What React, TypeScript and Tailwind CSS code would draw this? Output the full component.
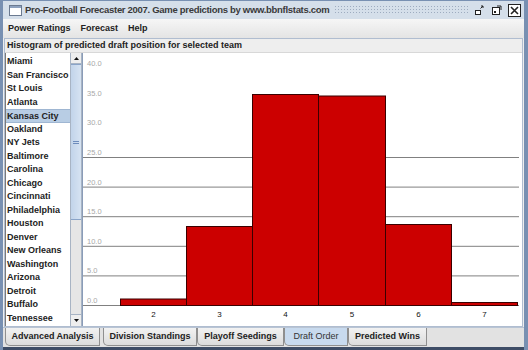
import React from "react";

const teams = [
  "Miami","San Francisco","St Louis","Atlanta","Kansas City","Oakland","NY Jets","Baltimore","Carolina","Chicago","Cincinnati","Philadelphia","Houston","Denver","New Orleans","Washington","Arizona","Detroit","Buffalo","Tennessee",
];

const bars = [
  { label: "2", x0: 38, x1: 104, top: 245.5 },
  { label: "3", x0: 104, x1: 170, top: 173 },
  { label: "4", x0: 170, x1: 236, top: 41 },
  { label: "5", x0: 236, x1: 303, top: 42.5 },
  { label: "6", x0: 303, x1: 369, top: 171 },
  { label: "7", x0: 369, x1: 435, top: 249 },
];

const yLabels = ["40.0","35.0","30.0","25.0","20.0","15.0","10.0","5.0","0.0"];

function Chart() {
  const zero = 252;
  const step = 29.6;
  return (
    <svg width="437" height="273" viewBox="0 0 437 273" className="block">
      <rect x="0" y="0" width="437" height="273" fill="#ffffff" />
      {[0, 1, 2, 3, 4, 5].map((i) => (
        <line key={i} x1="1" x2="437" y1={zero - i * step + 0.5} y2={zero - i * step + 0.5} stroke="#808080" strokeWidth="1" />
      ))}
      {yLabels.map((t, i) => (
        <text key={t} x="5" y={zero - (8 - i) * step - 2} fontSize="7.5" fill="#a8a8a8" fontFamily="'Liberation Sans', Arial, sans-serif">{t}</text>
      ))}
      {bars.map((b) => (
        <rect key={b.label} x={b.x0 + 0.5} y={b.top + 0.5} width={b.x1 - b.x0} height={zero - b.top} fill="#cc0000" stroke="#3a0000" strokeWidth="1" />
      ))}
      {bars.map((b) => (
        <text key={"l" + b.label} x={(b.x0 + b.x1) / 2 + 0.5} y="264" fontSize="8" textAnchor="middle" fill="#111" fontFamily="'Liberation Sans', Arial, sans-serif">{b.label}</text>
      ))}
      <line x1="0.5" x2="0.5" y1="0" y2="273" stroke="#8a9cb8" strokeWidth="1" />
    </svg>
  );
}

function TitleIcon() {
  return (
    <svg width="13" height="11" viewBox="0 0 13 11">
      <rect x="0.5" y="0.5" width="12" height="10" fill="#ffffff" stroke="#6b7a90" />
      <rect x="1" y="1" width="11" height="2" fill="#8ea2bf" />
    </svg>
  );
}

function WinButtons() {
  return (
    <div className="flex items-center gap-[6px] pr-[3px]">
      <svg width="11" height="11" viewBox="0 0 11 11">
        <rect x="1.5" y="5.5" width="5" height="4" fill="#fff" stroke="#222" />
        <path d="M7 1 L9 1 L9 3 M9 1 L6.5 3.5" stroke="#222" fill="none" />
      </svg>
      <svg width="11" height="11" viewBox="0 0 11 11">
        <rect x="1.5" y="2.5" width="7" height="7" fill="#fff" stroke="#222" />
        <path d="M6 1 L10 1 L10 5" stroke="#222" fill="none" />
        <rect x="3" y="6" width="2" height="2" fill="#222" />
      </svg>
      <svg width="13" height="13" viewBox="0 0 13 13">
        <rect x="0.5" y="0.5" width="12" height="12" fill="#fff" stroke="#222" />
        <path d="M3 3 L10 10 M10 3 L3 10" stroke="#222" strokeWidth="1.6" />
      </svg>
    </div>
  );
}

const tabs = [
  { t: "Advanced Analysis", w: "w-[95px]", sel: false },
  { t: "Division Standings", w: "w-[94px]", sel: false },
  { t: "Playoff Seedings", w: "w-[87px]", sel: false },
  { t: "Draft Order", w: "w-[64px]", sel: true },
  { t: "Predicted Wins", w: "w-[79px]", sel: false },
];

export default function App() {
  return (
    <div className="w-[528px] h-[350px] overflow-hidden bg-[#7890b2] pl-[3px] pr-[4px] pt-[1px] flex flex-col font-['Liberation_Sans',Arial,sans-serif] text-[#222]">
      {/* Title bar */}
      <div className="h-[18px] shrink-0 flex items-center bg-[#d5dfea] pl-[6px]">
        <TitleIcon />
        <span className="ml-[3px] text-[9.5px] font-bold text-[#3a3a3a] whitespace-nowrap tracking-[-0.3px]">
          Pro-Football Forecaster 2007. Game predictions by www.bbnflstats.com
        </span>
        <div className="flex-1 h-[10px] mx-[5px] bg-[radial-gradient(circle,#9eacc0_0.7px,transparent_0.9px)] bg-[length:3px_3px]" />
        <WinButtons />
      </div>
      {/* Menu bar */}
      <div className="h-[19px] shrink-0 flex items-center gap-[10px] pl-[5px] bg-gradient-to-b from-[#f6f6f6] to-[#e4e4e4] text-[9px] font-bold">
        <span>Power Ratings</span>
        <span>Forecast</span>
        <span>Help</span>
      </div>
      {/* Content */}
      <div className="flex-1 flex flex-col bg-[#eeeeee] min-h-0">
        <div className="flex-1 flex flex-col border border-[#b0bdd0] ml-[1px] mr-[1px] min-h-0">
          <div className="h-[14px] shrink-0 flex items-center pl-[2px] text-[9px] font-bold bg-[#eeeeee] border-b border-[#d8d8d8]">
            Histogram of predicted draft position for selected team
          </div>
          <div className="flex-1 flex min-h-0">
            {/* list */}
            <div className="w-[65px] shrink-0 bg-white border-l border-[#7a7a7a] overflow-hidden pt-[2px]">
              {teams.map((t) => (
                <div
                  key={t}
                  className={
                    "h-[13.5px] leading-[13.5px] pl-[1px] text-[9px] font-bold whitespace-nowrap " +
                    (t === "Kansas City" ? "bg-[#b8cde4] border-y border-[#9fb6d2] leading-[11.5px]" : "")
                  }
                >
                  {t}
                </div>
              ))}
            </div>
            {/* scrollbar */}
            <div className="w-[12px] shrink-0 flex flex-col bg-[#e6e6e6] border-x border-[#a8b4c4]">
              <div className="h-[11px] shrink-0 flex items-center justify-center bg-[#eeeeee] border-b border-[#a8b4c4]">
                <svg width="5" height="3" viewBox="0 0 5 3"><path d="M2.5 0 L5 3 L0 3 Z" fill="#111" /></svg>
              </div>
              <div className="h-[156px] shrink-0 bg-gradient-to-r from-[#c2d4ea] to-[#d6e3f2] border-y border-[#8aa4c8] flex items-center justify-center">
                <div className="w-[6px] flex flex-col gap-[1px]">
                  <div className="h-[1px] bg-[#6d8cbc]" />
                  <div className="h-[1px] bg-[#6d8cbc]" />
                </div>
              </div>
              <div className="flex-1" />
              <div className="h-[12px] shrink-0 flex items-center justify-center bg-[#eeeeee] border-t border-[#a8b4c4]">
                <svg width="5" height="3" viewBox="0 0 5 3"><path d="M0 0 L5 0 L2.5 3 Z" fill="#111" /></svg>
              </div>
            </div>
            {/* chart */}
            <div className="flex-1 bg-white overflow-hidden">
              <Chart />
            </div>
          </div>
        </div>
        {/* tabs */}
        <div className="h-[20px] shrink-0 flex items-start pl-[2px] bg-[#e2e2e2] border-t border-[#b8c4d4]">
          {tabs.map((tb, i) => (
            <div
              key={tb.t}
              className={
                tb.w +
                " h-[18px] shrink-0 flex items-center justify-center text-[9px] border border-t-0 border-[#8f8f8f] rounded-bl-[5px] " +
                (i === 0 ? "mr-[3px] " : "") +
                (tb.sel ? "bg-[#c8daee] font-normal text-[#333]" : "bg-gradient-to-b from-[#f2f2f2] to-[#dcdcdc] font-bold")
              }
            >
              {tb.t}
            </div>
          ))}
        </div>
      </div>
      <div className="h-[3px] shrink-0 bg-[#3e4d66]" />
    </div>
  );
}
